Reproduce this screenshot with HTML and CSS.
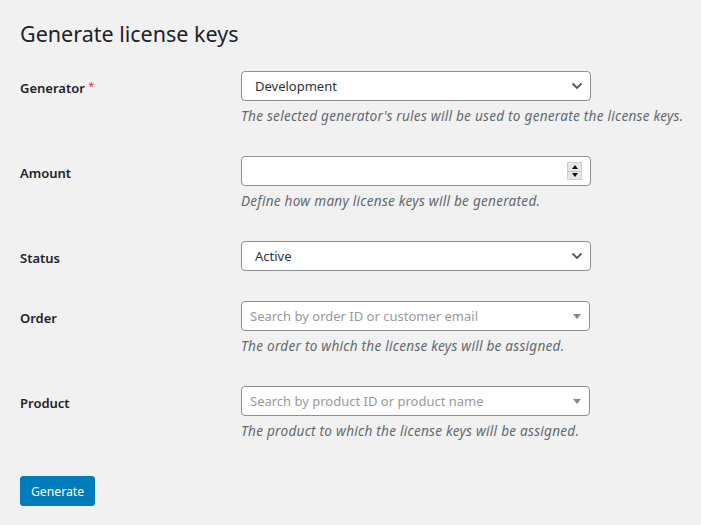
FILE: index.html
```html
<!DOCTYPE html>
<html>
<head>
<meta charset="utf-8">
<link rel="stylesheet" href="styles.css">
</head>
<body>
<div class="wrap">
  <h1 class="title">Generate license keys</h1>
  <div class="form-table">
    <div class="row">
      <div class="th">Generator <span class="req">*</span></div>
      <div class="td">
        <div class="select"><span>Development</span>
          <svg class="chev" width="12" height="8" viewBox="0 0 12 8"><path d="M1.5 1.5 L6 6 L10.5 1.5" fill="none" stroke="#50575e" stroke-width="1.8"/></svg>
        </div>
        <p class="description">The selected generator's rules will be used to generate the license keys.</p>
      </div>
    </div>
    <div class="row">
      <div class="th">Amount</div>
      <div class="td">
        <div class="select number">
          <div class="spin"><span class="up"></span><span class="down"></span></div>
        </div>
        <p class="description">Define how many license keys will be generated.</p>
      </div>
    </div>
    <div class="row">
      <div class="th">Status</div>
      <div class="td">
        <div class="select"><span>Active</span>
          <svg class="chev" width="12" height="8" viewBox="0 0 12 8"><path d="M1.5 1.5 L6 6 L10.5 1.5" fill="none" stroke="#50575e" stroke-width="1.8"/></svg>
        </div>
      </div>
    </div>
    <div class="row">
      <div class="th">Order</div>
      <div class="td">
        <div class="select2"><span class="ph">Search by order ID or customer email</span><span class="tri"></span></div>
        <p class="description">The order to which the license keys will be assigned.</p>
      </div>
    </div>
    <div class="row">
      <div class="th">Product</div>
      <div class="td">
        <div class="select2"><span class="ph">Search by product ID or product name</span><span class="tri"></span></div>
        <p class="description">The product to which the license keys will be assigned.</p>
      </div>
    </div>
  </div>
  <div class="submit"><button class="button-primary">Generate</button></div>
</div>
</body>
</html>
```

FILE: styles.css
```css
html, body {
  margin: 0;
  padding: 0;
  background: #f1f1f1;
  font-family: "Noto Sans", "Open Sans", sans-serif;
  color: #1d2327;
  font-size: 13px;
}
.wrap {
  padding: 10px 20px 0 20px;
}
.title {
  font-size: 21.5px;
  font-weight: 400;
  line-height: 30px;
  margin: 0;
  padding: 9px 0 4px;
  color: #1d2327;
}
.form-table {
  margin-top: 3px;
}
.row {
  display: grid;
  grid-template-columns: 210px 1fr;
}
.th {
  padding: 23px 10px 17px 0;
  font-size: 13px;
  font-weight: 600;
  line-height: 18px;
}
.req {
  color: #d63638;
  font-weight: 400;
  font-size: 11px;
  vertical-align: top;
  position: relative;
  top: -2px;
}
.td {
  padding: 15px 10px 15px 11px;
  min-width: 0;
}
.select, .select2 {
  box-sizing: border-box;
  width: 350px;
  height: 30px;
  background: #fff;
  border: 1px solid #8c8f94;
  border-radius: 4px;
  display: flex;
  align-items: center;
  justify-content: space-between;
  font-size: 13px;
  color: #2c3338;
  padding: 0 7px 0 13px;
}
.select2 {
  width: 349px;
  padding: 0 8px 0 8px;
}
.ph {
  color: #999;
}
.tri {
  width: 0;
  height: 0;
  border-left: 4px solid transparent;
  border-right: 4px solid transparent;
  border-top: 5px solid #888;
}
.number {
  justify-content: flex-end;
  padding-right: 8px;
}
.spin {
  width: 15px;
  height: 18px;
  display: flex;
  flex-direction: column;
  background: #e6e6e6;
  border: 1px solid #d0d0d0;
  box-sizing: border-box;
}
.spin span {
  flex: 1;
  position: relative;
}
.spin .up { border-bottom: 1px solid #c0c0c0; }
.spin .up::after, .spin .down::after {
  content: "";
  position: absolute;
  left: 50%;
  top: 50%;
  width: 0;
  height: 0;
  transform: translate(-50%, -50%);
  border-left: 3px solid transparent;
  border-right: 3px solid transparent;
}
.spin .up::after { border-bottom: 4px solid #111; }
.spin .down::after { border-top: 4px solid #111; }
.description {
  margin: 4px 0 0;
  font-size: 13.6px;
  letter-spacing: 0.25px;
  font-style: italic;
  color: #646970;
  line-height: 21px;
  white-space: nowrap;
}
.submit {
  padding: 20px 0 0;
}
.button-primary {
  background: #007cba;
  border: 1px solid #007cba;
  color: #fff;
  font-family: inherit;
  font-size: 12.2px;
  height: 30px;
  padding: 0 10px;
  border-radius: 3px;
}
```
